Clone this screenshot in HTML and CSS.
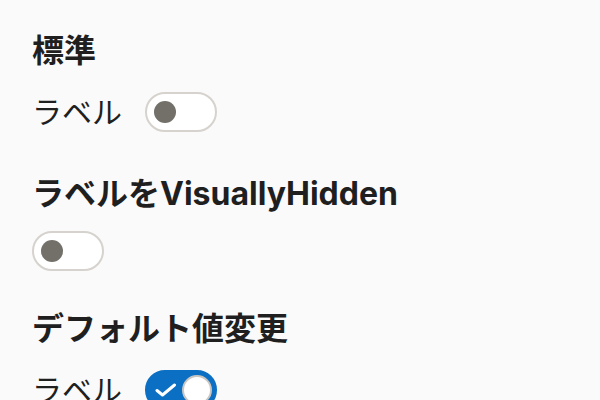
FILE: index.html
```html
<!DOCTYPE html>
<html lang="ja">
<head>
<meta charset="utf-8">
<link rel="stylesheet" href="styles.css">
</head>
<body>
<main class="page">
  <section class="sec">
    <h2 class="title">標準</h2>
    <label class="row">
      <span class="lbl">ラベル</span>
      <span class="sw"><span class="knob"></span></span>
    </label>
  </section>
  <section class="sec">
    <h2 class="title">ラベルをVisuallyHidden</h2>
    <label class="row row-bare">
      <span class="sw"><span class="knob"></span></span>
    </label>
  </section>
  <section class="sec">
    <h2 class="title">デフォルト値変更</h2>
    <label class="row">
      <span class="lbl">ラベル</span>
      <span class="sw on">
        <svg class="check" viewBox="0 0 22 14" width="22" height="14"><path d="M2 7.5 L7.5 12 L19.5 2" fill="none" stroke="#fff" stroke-width="3" stroke-linecap="round" stroke-linejoin="round"/></svg>
        <span class="knob"></span>
      </span>
    </label>
  </section>
</main>
</body>
</html>
```
FILE: styles.css
```css
html, body {
  margin: 0;
  padding: 0;
  background: #fafafa;
}
body {
  font-family: Inter, "Noto Sans CJK JP", "Noto Sans", sans-serif;
  color: #1f1f1f;
}
.page {
  padding: 27px 32px;
  display: flex;
  flex-direction: column;
  gap: 34px;
}
.sec {
  display: flex;
  flex-direction: column;
  gap: 13px;
}
.title {
  margin: 0;
  font-size: 32px;
  line-height: 48px;
  font-weight: 700;
}
.row {
  display: flex;
  align-items: center;
  gap: 23px;
  height: 48px;
}
.row-bare {
  height: 40px;
}
.lbl {
  font-size: 30px;
  line-height: 48px;
}
.sw {
  position: relative;
  box-sizing: border-box;
  width: 72px;
  height: 40px;
  border: 2px solid #d6d2ce;
  border-radius: 20px;
  background: #fff;
  flex: none;
}
.sw .knob {
  position: absolute;
  left: 7px;
  top: 7px;
  width: 22px;
  height: 22px;
  border-radius: 50%;
  background: #727069;
}
.sw.on {
  background: #0b6fc3;
  border-color: #0b6fc3;
}
.sw.on .knob {
  left: auto;
  right: 3px;
  top: 3px;
  width: 30px;
  height: 30px;
  box-sizing: border-box;
  background: #fff;
  border: 2px solid #c9c6c2;
}
.check {
  position: absolute;
  left: 8px;
  top: 11px;
}
```
